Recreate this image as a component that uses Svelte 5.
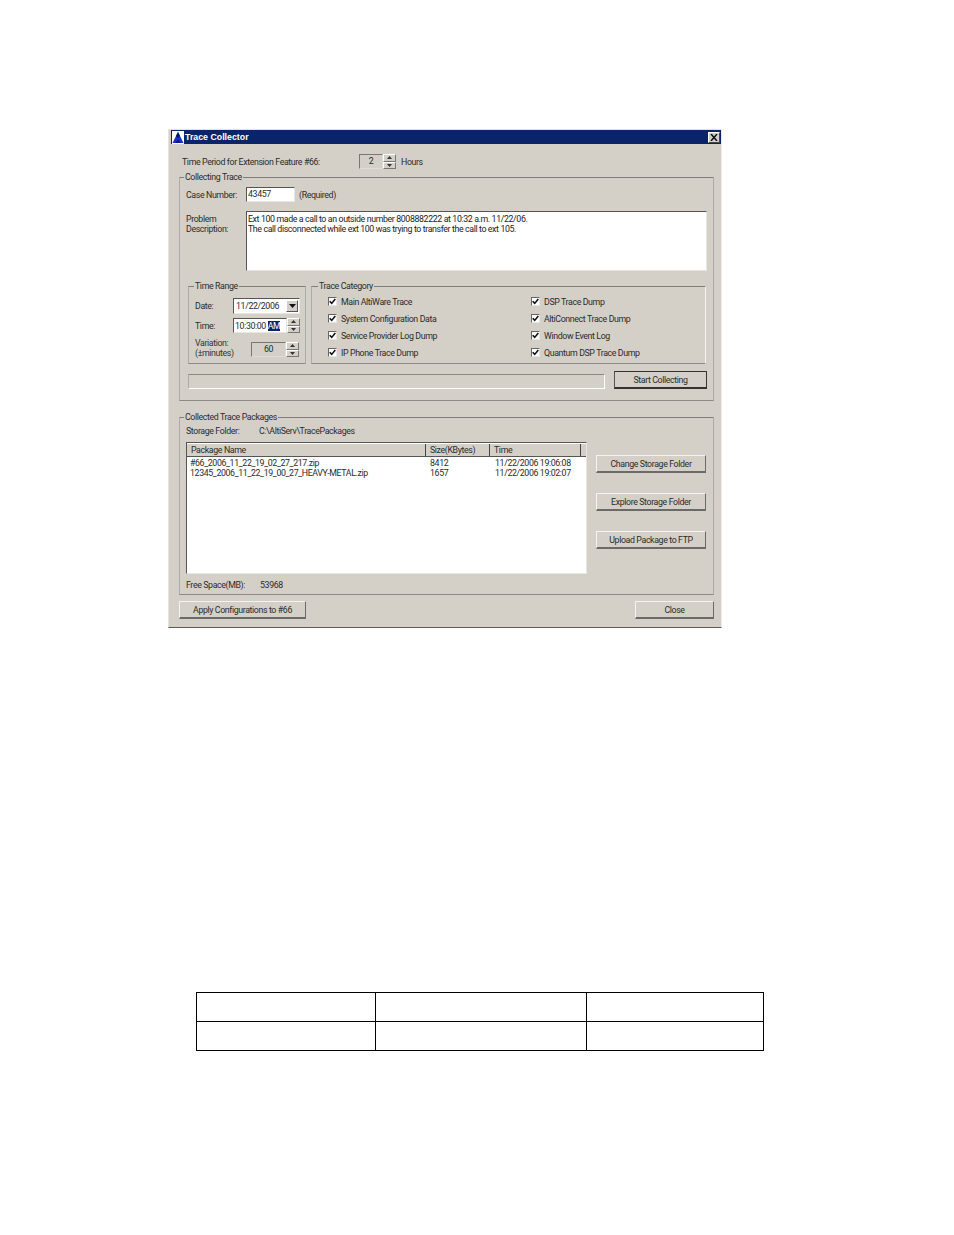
<script>
  const colA = ['Main AltiWare Trace', 'System Configuration Data', 'Service Provider Log Dump', 'IP Phone Trace Dump'];
  const colB = ['DSP Trace Dump', 'AltiConnect Trace Dump', 'Window Event Log', 'Quantum DSP Trace Dump'];
  const checks = colA.flatMap((a, i) => [a, colB[i]]);
  const packages = [
    ['#66_2006_11_22_19_02_27_217.zip', '8412', '11/22/2006 19:06:08'],
    ['12345_2006_11_22_19_00_27_HEAVY-METAL.zip', '1657', '11/22/2006 19:02:07']
  ];
</script>

{#snippet spin()}
  <span class="spin">
    <span class="spinbtn"><svg width="5" height="3" viewBox="0 0 5 3"><path d="M2.5 0 5 3H0z" fill="#333"/></svg></span>
    <span class="spinbtn"><svg width="5" height="3" viewBox="0 0 5 3"><path d="M0 0h5L2.5 3z" fill="#333"/></svg></span>
  </span>
{/snippet}

<div class="window">
  <div class="title">
    <svg class="logo" width="12" height="13" viewBox="0 0 12 13">
      <rect width="12" height="13" fill="#fff"/>
      <path d="M6 1 11.5 12H.5z" fill="#1a2fd0"/>
      <path d="M6 1 8 5 6 7 4 5z" fill="#06125e"/>
      <path d="M3 12 6 8l3 4z" fill="#0a1a8c"/>
    </svg>
    <span class="title-text">Trace Collector</span>
    <span class="close"><svg width="8" height="7" viewBox="0 0 8 7"><path d="M1 0l6 7M7 0 1 7" stroke="#111" stroke-width="1.5" fill="none"/></svg></span>
  </div>

  <div class="content">
    <div class="period">
      <span class="period-label">Time Period for Extension Feature #66:</span>
      <span class="hours-field">2</span>
      {@render spin()}
      <span class="hours-unit">Hours</span>
    </div>

    <section class="group collecting">
      <span class="legend">Collecting Trace</span>
      <div class="case-row">
        <span class="form-label">Case Number:</span>
        <span class="sunken case-input">43457</span>
        <span class="required">(Required)</span>
      </div>
      <div class="problem-row">
        <span class="form-label two-line">Problem<br />Description:</span>
        <div class="sunken problem-text">
          <div>Ext 100 made a call to an outside number 8008882222 at 10:32 a.m. 11/22/06.</div>
          <div>The call disconnected while ext 100 was trying to transfer the call to ext 105.</div>
        </div>
      </div>

      <div class="panels">
        <section class="group range">
          <span class="legend">Time Range</span>
          <div class="range-row">
            <span class="range-label">Date:</span>
            <span class="sunken combo">
              <span class="combo-text">11/22/2006</span>
              <span class="drop"><svg width="7" height="4" viewBox="0 0 7 4"><path d="M0 0h7L3.5 4z" fill="#111"/></svg></span>
            </span>
          </div>
          <div class="range-row time-row">
            <span class="range-label">Time:</span>
            <span class="sunken time-field">10:30:00 <mark>AM</mark></span>
            {@render spin()}
          </div>
          <div class="range-row variation-row">
            <span class="variation-label">Variation:<br />(±minutes)</span>
            <span class="variation-field">60</span>
            {@render spin()}
          </div>
        </section>

        <section class="group category">
          <span class="legend">Trace Category</span>
          <div class="check-grid">
            {#each checks as c}
              <div class="check-item">
                <span class="checkbox"><svg width="7" height="7" viewBox="0 0 7 7"><path d="M.7 3.2 2.7 5.4 6.3 1" stroke="#111" stroke-width="1.6" fill="none"/></svg></span>
                <span>{c}</span>
              </div>
            {/each}
          </div>
        </section>
      </div>

      <div class="progress-row">
        <div class="progress"></div>
        <button class="btn default">Start Collecting</button>
      </div>
    </section>

    <section class="group collected">
      <span class="legend">Collected Trace Packages</span>
      <div class="storage-row">
        <span class="storage-label">Storage Folder:</span>
        <span>C:\AltiServ\TracePackages</span>
      </div>
      <div class="list-row">
        <div class="list">
          <div class="list-head">
            <span class="col-name">Package Name</span>
            <span class="col-size">Size(KBytes)</span>
            <span class="col-time">Time</span>
            <span class="col-rest"></span>
          </div>
          <div class="list-body">
            {#each packages as p}
              <div class="list-line">
                <span class="cell-name">{p[0]}</span>
                <span class="cell-size">{p[1]}</span>
                <span>{p[2]}</span>
              </div>
            {/each}
          </div>
        </div>
        <div class="side-buttons">
          <button class="btn">Change Storage Folder</button>
          <button class="btn">Explore Storage Folder</button>
          <button class="btn">Upload Package to FTP</button>
        </div>
      </div>
      <div class="free-row">
        <span class="free-label">Free Space(MB):</span>
        <span>53968</span>
      </div>
    </section>

    <div class="footer">
      <button class="btn apply">Apply Configurations to #66</button>
      <button class="btn closebtn">Close</button>
    </div>
  </div>
</div>

<table class="blank">
  <tbody>
    <tr><td class="c1"></td><td class="c2"></td><td></td></tr>
    <tr><td></td><td></td><td></td></tr>
  </tbody>
</table>

<style>
  :global(body) { background: #fff; margin: 0; }

  .window {
    box-sizing: border-box;
    width: 554px;
    height: 499px;
    margin: 129px 0 0 168px;
    background: #d4d0c8;
    border: 1px solid #e4e2de;
    border-right-color: #ecebe8;
    border-bottom: 1px solid #5c5c5c;
    padding: 0 0 0 2px;
    font: 8.8px/10px Roboto, "Liberation Sans", Arial, sans-serif;
    letter-spacing: -0.38px;
    color: #2b2b2b;
  }

  .title {
    height: 14px;
    width: 550px;
    background: #0a246a;
    display: flex;
    align-items: center;
    padding-left: 1px;
    box-sizing: border-box;
  }
  .logo { flex: none; }
  .title-text {
    margin-left: 1px;
    color: #fff;
    font-weight: 700;
    font-size: 8.8px;
    letter-spacing: 0;
    font-family: "Liberation Sans", Arial, sans-serif;
  }
  .close {
    margin-left: auto;
    margin-right: 1px;
    width: 12px;
    height: 11px;
    box-sizing: border-box;
    background: #d4d0c8;
    border: 1px solid;
    border-color: #fff #444 #444 #fff;
    display: flex;
    align-items: center;
    justify-content: center;
  }

  .content { padding: 10px 0 0 8px; width: 535px; }

  .period { display: flex; align-items: center; height: 15px; padding-left: 3px; }
  .period-label { width: 177px; flex: none; white-space: nowrap; }
  .hours-field {
    box-sizing: border-box;
    width: 24px;
    height: 15px;
    border: 1px solid;
    border-color: #777 #ddd #ddd #777;
    text-align: center;
    line-height: 13px;
  }
  .hours-unit { margin-left: 5px; }

  .spin { display: flex; flex-direction: column; width: 13px; height: 15px; flex: none; }
  .spinbtn {
    flex: 1;
    box-sizing: border-box;
    background: #d4d0c8;
    border: 1px solid;
    border-color: #fff #777 #777 #fff;
    display: flex;
    align-items: center;
    justify-content: center;
  }

  .group {
    position: relative;
    box-sizing: border-box;
    border: 1px solid #aeaca8;
    border-top-color: #7f7e7a;
    border-bottom-color: #8b8a86;
  }
  .legend {
    position: absolute;
    top: -6px;
    left: 4px;
    background: #d4d0c8;
    padding: 0 1px;
    white-space: nowrap;
  }
  .range .legend { left: 5px; }
  .category .legend { left: 6px; }

  .collecting { margin-top: 8px; height: 224px; padding: 9px 0 0 6px; }
  .case-row { display: flex; align-items: center; height: 15px; }
  .form-label { width: 60px; flex: none; }
  .two-line { padding-top: 3px; }
  .sunken {
    box-sizing: border-box;
    background: #fff;
    border: 1px solid;
    border-color: #555 #e8e6e2 #e8e6e2 #555;
  }
  .case-input { width: 49px; height: 15px; padding-left: 1px; line-height: 13px; }
  .required { margin-left: 4px; }
  .problem-row { display: flex; margin-top: 9px; }
  .problem-text {
    width: 461px;
    height: 60px;
    padding: 2px 0 0 1px;
    white-space: nowrap;
    color: #222;
  }

  .panels { display: flex; gap: 5px; margin: 15px 0 0 2px; }
  .range { width: 118px; height: 78px; padding: 11px 0 0 6px; }
  .category { width: 395px; height: 78px; padding: 6px 0 0 16px; border-right-color: #f4f3f0; }

  .range-row { display: flex; align-items: center; }
  .range-label { width: 38px; flex: none; }
  .combo { width: 67px; height: 16px; display: flex; align-items: center; padding-left: 2px; }
  .combo-text { flex: 1; }
  .drop {
    width: 12px;
    height: 12px;
    box-sizing: border-box;
    background: #d4d0c8;
    border: 1px solid;
    border-color: #fff #555 #555 #fff;
    margin-right: 1px;
    display: flex;
    align-items: center;
    justify-content: center;
  }
  .time-row { margin-top: 4px; }
  .time-field {
    width: 54px;
    height: 15px;
    padding-left: 1px;
    line-height: 14px;
    white-space: nowrap;
  }
  mark { background: #0a246a; color: #fff; }
  .variation-row { margin-top: 9px; height: 15px; }
  .variation-label { width: 56px; flex: none; margin: -7px 0 -3px; color: #333; }
  .variation-field {
    box-sizing: border-box;
    width: 35px;
    height: 15px;
    border: 1px solid;
    border-color: #777 #ddd #ddd #777;
    text-align: center;
    line-height: 13px;
  }

  .check-grid { display: grid; grid-template-columns: 203px 1fr; grid-auto-rows: 17px; }
  .check-item { display: flex; align-items: center; gap: 4px; white-space: nowrap; }
  .checkbox {
    box-sizing: border-box;
    width: 9px;
    height: 9px;
    background: #fff;
    border: 1px solid;
    border-color: #666 #e8e6e2 #e8e6e2 #666;
    display: flex;
    align-items: center;
    justify-content: center;
    flex: none;
  }

  .progress-row { display: flex; align-items: flex-end; gap: 9px; margin: 7px 0 0 2px; }
  .progress {
    box-sizing: border-box;
    width: 417px;
    height: 15px;
    border: 1px solid;
    border-color: #8a8986 #fff #fff #aeaca8;
  }

  .btn {
    box-sizing: border-box;
    height: 18px;
    padding: 0;
    background: #d4d0c8;
    border: 1px solid;
    border-color: #f4f3f0 #6a6a68 #6a6a68 #f4f3f0;
    border-bottom-width: 2px;
    font: inherit;
    letter-spacing: inherit;
    color: inherit;
    text-align: center;
    white-space: nowrap;
  }
  .default { width: 93px; border-color: #333 #333 #333 #555; }

  .collected { margin-top: 16px; height: 178px; padding: 7px 0 0 6px; }
  .storage-row { display: flex; height: 12px; line-height: 12px; }
  .storage-label { width: 73px; flex: none; }
  .list-row { display: flex; margin-top: 5px; }
  .list {
    box-sizing: border-box;
    width: 401px;
    height: 132px;
    background: #fff;
    border: 1px solid;
    border-color: #555 #e8e6e2 #e8e6e2 #555;
    display: flex;
    flex-direction: column;
  }
  .list-head {
    display: flex;
    height: 14px;
    flex: none;
    background: #d4d0c8;
    line-height: 13px;
    border-top: 1px solid #fff;
    box-sizing: border-box;
    border-bottom: 1px solid #555;
  }
  .list-head span {
    box-sizing: border-box;
    padding-left: 4px;
    border-right: 1px solid #444;
    white-space: nowrap;
  }
  .col-name { width: 239px; }
  .col-size { width: 64px; }
  .col-time { width: 91px; }
  .list-head .col-rest { flex: 1; border-right: none; }
  .list-body { padding: 1px 0 0 3px; }
  .list-line { display: flex; height: 10px; white-space: nowrap; }
  .cell-name { width: 240px; flex: none; }
  .cell-size { width: 65px; flex: none; }
  .side-buttons {
    margin: 13px 0 0 9px;
    display: flex;
    flex-direction: column;
    gap: 20px;
    width: 110px;
  }
  .free-row { display: flex; margin-top: 5px; line-height: 12px; }
  .free-label { width: 74px; flex: none; }

  .footer { display: flex; justify-content: space-between; margin-top: 6px; }
  .apply { width: 127px; }
  .closebtn { width: 79px; }

  .blank {
    border-collapse: collapse;
    table-layout: fixed;
    width: 568px;
    margin: 364px 0 0 196px;
  }
  .blank td { border: 1px solid #000; height: 28px; padding: 0; }
  .c1 { width: 178px; }
  .c2 { width: 210px; }
</style>
